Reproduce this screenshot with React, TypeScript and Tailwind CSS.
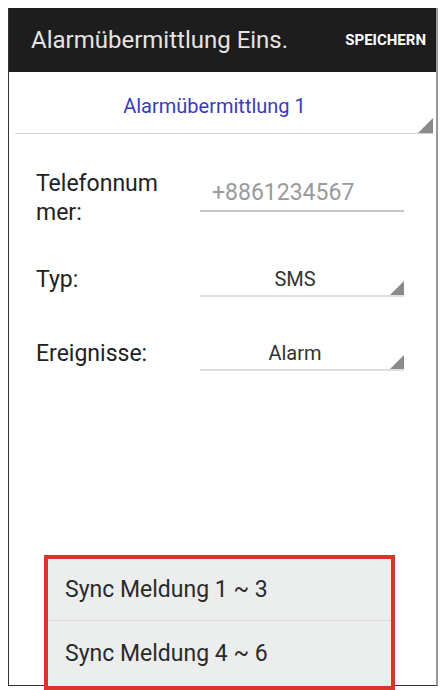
import React from 'react';

const rows = [
  { label: 'Typ:', value: 'SMS', gap: 'mt-[38px]' },
  { label: 'Ereignisse:', value: 'Alarm', gap: 'mt-[42px]' },
];

function Corner({ size = 14 }: { size?: number }) {
  return (
    <svg width={size} height={size} viewBox="0 0 14 14" className="shrink-0 self-end">
      <polygon points="14,0 14,14 0,14" fill="#8a8a8a" />
    </svg>
  );
}

export default function App() {
  return (
    <div className="min-h-[690px] bg-white pl-[8px] pt-[8px]" style={{ fontFamily: 'Roboto, "Noto Sans", sans-serif' }}>
      <div className="relative flex h-[678px] w-[430px] flex-col border-b border-l border-r-2 border-b-[#333] border-l-[#333] border-r-[#9a9a9a] bg-white">
        {/* action bar */}
        <div className="flex h-[64px] shrink-0 items-center justify-between bg-[#1d1d1d] pl-[22px] pr-[10px]">
          <span className="text-[24px] leading-none text-[#e4e4e4]">Alarmübermittlung Eins.</span>
          <span className="text-[15px] font-bold leading-none text-white">SPEICHERN</span>
        </div>

        {/* channel spinner */}
        <div className="ml-[6px] mr-[3px] flex h-[62px] border-b border-[#d0d0d0] pt-[24px]">
          <div className="flex-1 pr-[4px] text-center text-[20px] leading-[20px] text-[#3b3bb8]">Alarmübermittlung 1</div>
          <Corner size={15} />
        </div>

        <div className="pl-[27px]">
          <div className="mt-[35px] flex items-start">
            <div className="w-[164px] text-[23px] leading-[29px] text-[#222]">
              Telefonnum
              <br />
              mer:
            </div>
            <div className="mt-[9px] h-[34px] w-[204px] border-b-2 border-[#c8c8c8] pl-[12px] text-[23px] leading-[29px] text-[#9a9a9a]">
              +8861234567
            </div>
          </div>

          {rows.map((r) => (
            <div key={r.label} className={`${r.gap} flex items-start`}>
              <div className="w-[164px] text-[23px] leading-[29px] text-[#222]">{r.label}</div>
              <div className="flex h-[32px] w-[204px] border-b-2 border-[#dedede]">
                <div className="flex-1 pt-[4px] text-center text-[20px] leading-[20px] text-[#333]">{r.value}</div>
                <Corner />
              </div>
            </div>
          ))}
        </div>

        {/* sync popup */}
        <div className="absolute left-[35px] top-[547px] flex h-[135px] w-[351px] flex-col border-4 border-[#d8352b] bg-[#eceeee]">
          <div className="flex h-[62px] items-center border-b border-[#dadada] pl-[17px] text-[23px] leading-[29px] text-[#2a2a2a]">
            Sync Meldung 1 ~ 3
          </div>
          <div className="flex flex-1 items-center pl-[17px] text-[23px] leading-[29px] text-[#2a2a2a]">
            Sync Meldung 4 ~ 6
          </div>
        </div>
      </div>
    </div>
  );
}
